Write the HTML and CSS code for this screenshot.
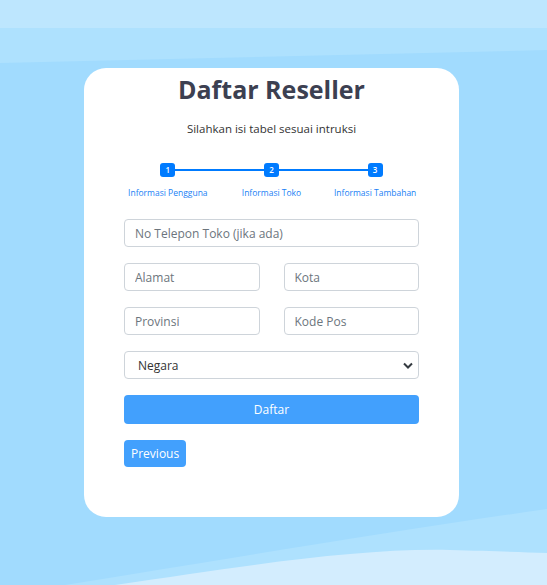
FILE: index.html
```html
<!DOCTYPE html>
<html lang="id">
<head>
<meta charset="utf-8">
<title>Daftar Reseller</title>
<link rel="stylesheet" href="styles.css">
</head>
<body>
<svg class="bg" width="547" height="585" viewBox="0 0 547 585" preserveAspectRatio="none">
  <rect x="0" y="0" width="547" height="585" fill="#a1dbfe"/>
  <rect x="0" y="0" width="547" height="63" fill="#aee1fe"/>
  <polygon points="0,63 547,50 547,63" fill="#a1dbfe"/>
  <rect x="0" y="0" width="547" height="28" fill="#bde6fe"/>
  <path d="M65,585 C250,555 400,530 547,509 L547,585 Z" fill="#aee1fe"/>
  <path d="M115,585 C250,565 360,548 450,550 C490,551 520,552 547,553 L547,585 Z" fill="#d3edfe"/>
</svg>
<main class="card">
  <h1 class="title">Daftar Reseller</h1>
  <p class="subtitle">Silahkan isi tabel sesuai intruksi</p>
  <div class="stepper">
    <div class="step"><span class="num">1</span><span class="label">Informasi Pengguna</span></div>
    <div class="step"><span class="num">2</span><span class="label">Informasi Toko</span></div>
    <div class="step"><span class="num">3</span><span class="label">Informasi Tambahan</span></div>
  </div>
  <form class="form">
    <input class="field" type="text" placeholder="No Telepon Toko (jika ada)">
    <div class="row">
      <input class="field" type="text" placeholder="Alamat">
      <input class="field" type="text" placeholder="Kota">
    </div>
    <div class="row">
      <input class="field" type="text" placeholder="Provinsi">
      <input class="field" type="text" placeholder="Kode Pos">
    </div>
    <select class="field select">
      <option>Negara</option>
    </select>
    <button class="btn btn-block" type="button">Daftar</button>
    <div class="actions">
      <button class="btn" type="button">Previous</button>
    </div>
  </form>
</main>
</body>
</html>
```
FILE: styles.css
```css
* { box-sizing: border-box; }
html, body { margin: 0; padding: 0; }
body {
  width: 547px;
  height: 585px;
  overflow: hidden;
  position: relative;
  font-family: "Open Sans", "Noto Sans", sans-serif;
  color: #333;
}
.bg {
  position: absolute;
  left: 0;
  top: 0;
  z-index: -1;
}
.card {
  margin: 68px 0 0 84px;
  width: 375px;
  height: 449px;
  background: #fff;
  border-radius: 22px;
  padding: 4px 32px 0;
}
.title {
  margin: 0;
  text-align: center;
  font-size: 25px;
  line-height: 34px;
  font-weight: 700;
  color: #3c4051;
}
.subtitle {
  margin: 15px 0 0;
  text-align: center;
  font-size: 11.5px;
  line-height: 16px;
  color: #333;
}
.stepper {
  margin-top: 26px;
  display: grid;
  grid-template-columns: repeat(3, 1fr);
  position: relative;
}
.stepper::before {
  content: "";
  position: absolute;
  left: 16.67%;
  right: 16.67%;
  top: 6px;
  height: 2px;
  background: #007bff;
}
.step {
  display: flex;
  flex-direction: column;
  align-items: center;
  position: relative;
}
.num {
  width: 15px;
  height: 14px;
  border-radius: 3px;
  background: #007bff;
  color: #fff;
  font-size: 8px;
  font-weight: 600;
  line-height: 14px;
  text-align: center;
}
.label {
  margin-top: 10px;
  font-size: 8.5px;
  line-height: 12px;
  color: #1a7ff5;
  white-space: nowrap;
}
.form {
  margin-top: 20px;
  padding: 0 8px;
  display: flex;
  flex-direction: column;
  gap: 16px;
}
.row {
  display: grid;
  grid-template-columns: 1fr 1fr;
  gap: 24px;
}
.field {
  width: 100%;
  height: 28px;
  border: 1px solid #ced4da;
  border-radius: 4px;
  padding: 0 10px;
  font-family: inherit;
  font-size: 12px;
  color: #495057;
  background: #fff;
  outline: none;
}
.field::placeholder { color: #6c757d; }
.select {
  appearance: none;
  -webkit-appearance: none;
  color: #333;
  padding-left: 13px;
  background-image: url("data:image/svg+xml;utf8,<svg xmlns='http://www.w3.org/2000/svg' width='10' height='7' viewBox='0 0 10 7'><path d='M1 1.5 L5 5.5 L9 1.5' fill='none' stroke='%23343a40' stroke-width='2'/></svg>");
  background-repeat: no-repeat;
  background-position: right 5px center;
  background-size: 10px 7px;
}
.btn {
  height: 29px;
  border: none;
  border-radius: 4px;
  background: #42a0fd;
  color: #fff;
  font-family: inherit;
  font-size: 12px;
  padding: 0 7px;
  cursor: pointer;
}
.btn-block { width: 100%; }
.actions {
  display: flex;
  margin-top: 0;
}
.actions .btn { height: 27px; }
```
